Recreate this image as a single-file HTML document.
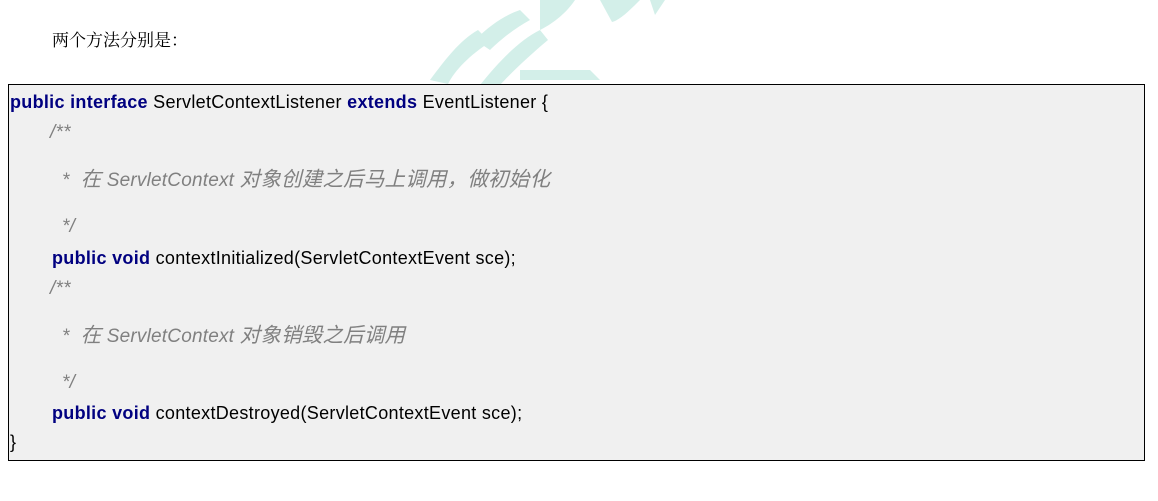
<!DOCTYPE html>
<html><head><meta charset="utf-8"><style>
body{margin:0;width:1158px;height:501px;background:#fff;position:relative;overflow:hidden;font-family:"Liberation Sans","Noto Sans CJK SC",sans-serif}
.t{position:absolute;left:52px;top:26px;font-family:"Liberation Serif","Noto Serif CJK SC",serif;font-size:17px;color:#000}
.box{position:absolute;left:8px;top:84px;width:1135px;height:375px;border:1px solid #000;background:#f0f0f0}
.l{position:absolute;font-size:18px;letter-spacing:0.3px;white-space:pre;color:#000;line-height:22px}
.k{color:#000080;font-weight:bold}
.c{color:#808080;font-style:italic;font-size:19px;letter-spacing:0.2px}
.z{font-size:20.5px}
</style></head><body>
<svg style="position:absolute;left:0;top:0" width="1158" height="501">
<g fill="#d3efe9">
<path d="M430 80 C445 60 460 40 478 30 L490 42 C470 55 455 70 448 84 Z"/>
<path d="M475 40 C490 25 505 15 520 10 L530 20 C515 28 500 40 490 50 Z"/>
<path d="M480 85 C500 60 520 40 540 30 L548 40 C530 55 512 72 500 85 Z"/>
<path d="M520 70 L590 70 L600 80 L520 80 Z"/>
<path d="M540 0 L575 0 C565 15 550 25 540 30 Z"/>
<path d="M600 0 L640 0 C630 10 620 20 612 22 Z"/>
<path d="M650 0 L665 0 L655 15 Z"/>
</g></svg>
<div class="t">两个方法分别是：</div>
<div class="box"></div>
<div class="l" style="left:10px;top:91px"><span class="k">public interface</span> ServletContextListener <span class="k">extends</span> EventListener {</div>
<div class="l c" style="left:50px;top:122px">/**</div>
<div class="l c" style="left:62px;top:169px">*  <span class="z">在</span> ServletContext <span class="z">对象创建之后马上调用，做初始化</span></div>
<div class="l c" style="left:62px;top:216px">*/</div>
<div class="l" style="left:52px;top:247px"><span class="k">public void</span> contextInitialized(ServletContextEvent sce);</div>
<div class="l c" style="left:50px;top:278px">/**</div>
<div class="l c" style="left:62px;top:325px">*  <span class="z">在</span> ServletContext <span class="z">对象销毁之后调用</span></div>
<div class="l c" style="left:62px;top:372px">*/</div>
<div class="l" style="left:52px;top:402px"><span class="k">public void</span> contextDestroyed(ServletContextEvent sce);</div>
<div class="l" style="left:10px;top:431px">}</div>
</body></html>
